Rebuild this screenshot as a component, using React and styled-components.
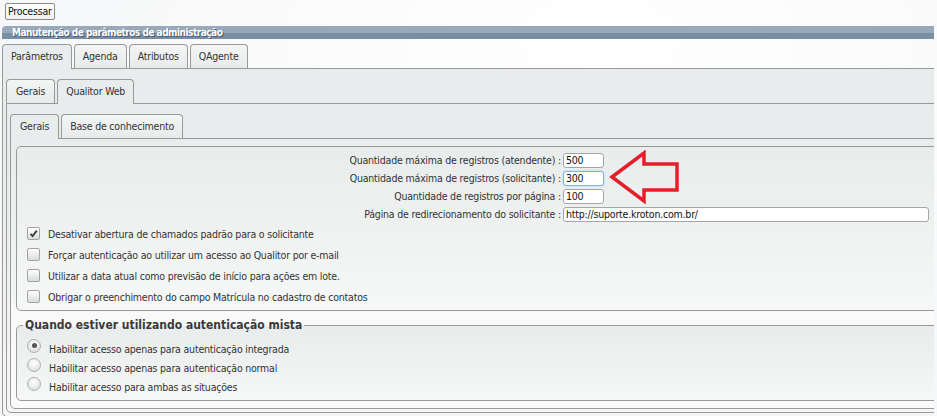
import React from "react";
import styled, { createGlobalStyle, css } from "styled-components";

const GlobalStyle = createGlobalStyle`
  html, body {
    margin: 0;
    padding: 0;
    background: #fafbfb;
  }
  body {
    font-family: Tahoma, "DejaVu Sans Condensed", "DejaVu Sans", sans-serif;
    font-size: 10.5px;
    letter-spacing: -0.2px;
    color: #222;
  }
`;

const Page = styled.div`
  width: 937px;
  height: 416px;
  overflow: hidden;
  background: radial-gradient(ellipse at 64% 10%, #ffffff 0, #f7f8f9 60%, #f3f5f6 100%);
`;

const Toolbar = styled.div`
  padding: 3px 0 0 5px;
  height: 17px;
`;

const Button = styled.button`
  height: 17px;
  padding: 0 2px;
  font: inherit;
  letter-spacing: inherit;
  color: #111;
  background: linear-gradient(#ffffff, #f0f0f0);
  border: 1px solid #8a8a8a;
  border-radius: 2px;
  line-height: 15px;
`;

const Clip = styled.div`
  margin: 6px 0 0 2px;
  width: 932px;
  overflow: hidden;
`;

const Window = styled.div`
  width: 960px;
`;

const TitleBar = styled.div`
  height: 13px;
  line-height: 13px;
  padding-left: 10px;
  border-radius: 4px 0 0 0;
  background: linear-gradient(#98aab9 0, #98aab9 55%, #7a8ea3 55%, #7a8ea3 100%);
  color: #fff;
  font-size: 10px;
  font-weight: bold;
  letter-spacing: -0.5px;
  text-shadow: 1px 1px 0 #4a5a6c;
`;

const TabStrip = styled.div`
  display: flex;
  align-items: flex-end;
  gap: 2px;
  height: 24px;
  margin-top: ${(p) => p.$top || 0}px;
  position: relative;
  z-index: 1;
`;

const Tab = styled.div`
  height: 23px;
  line-height: 23px;
  padding: 0 ${(p) => p.$pad || 8}px;
  border: 1px solid #999;
  border-bottom: none;
  border-radius: 4px 4px 0 0;
  color: #333;
  background: linear-gradient(#f4f5f5, #e8ebeb);
  box-sizing: content-box;
  ${(p) =>
    p.$active &&
    css`
      height: 24px;
      margin-bottom: -1px;
      background: #e9ecec;
    `}
`;

const Panel = styled.div`
  border: 1px solid #999;
  border-radius: 0 0 5px 5px;
  padding: ${(p) => p.$pad};
  background: ${(p) =>
    p.$fade
      ? "linear-gradient(#e9ecec 0, #f4f5f5 160px, #fafafa 175px, #fafafa 100%)"
      : "linear-gradient(#e9ecec 0, #e9ecec 40px, #f5f6f6 100%)"};
`;

const Box = styled.div`
  border: 1px solid #999;
  border-radius: 5px;
  padding: 4px 0 3px 0;
  background: linear-gradient(#e9ecec, #f6f7f7);
`;

const FormGrid = styled.div`
  display: grid;
  grid-template-columns: 544px 1fr;
  grid-auto-rows: 18px;
  align-items: center;
  column-gap: 2px;
`;

const Label = styled.label`
  text-align: right;
  color: #333;
  white-space: nowrap;
`;

const TextInput = styled.input`
  box-sizing: border-box;
  width: ${(p) => p.$w}px;
  height: 15px;
  padding: 0 2px;
  font: inherit;
  letter-spacing: inherit;
  color: #111;
  background: #fff;
  border: 1px solid ${(p) => (p.$focus ? "#7eb4ea" : "#a5a5a5")};
  border-radius: 3px;
  box-shadow: ${(p) => (p.$focus ? "0 0 2px #9cc8f0" : "none")};
  outline: none;
`;

const OptionList = styled.div`
  padding: ${(p) => p.$pad || "0 0 0 10px"};
`;

const Option = styled.div`
  display: flex;
  align-items: center;
  height: ${(p) => p.$h}px;
  color: #333;
  gap: 8px;
`;

const Check = styled.span`
  width: 11px;
  height: 11px;
  border: 1px solid #a3a3a3;
  border-radius: 2px;
  background: linear-gradient(#ffffff, #d9dcdc);
  display: flex;
  align-items: center;
  justify-content: center;
  flex-shrink: 0;
`;

const Radio = styled.span`
  width: 12px;
  height: 12px;
  border: 1px solid #b0b0b0;
  border-radius: 50%;
  background: radial-gradient(circle at 50% 35%, #ffffff, #d6d9d9);
  display: flex;
  align-items: center;
  justify-content: center;
  flex-shrink: 0;
  margin-top: -6px;
  &::after {
    content: "";
    display: ${(p) => (p.$on ? "block" : "none")};
    width: 5px;
    height: 5px;
    border-radius: 50%;
    background: #555;
  }
`;

const Fieldset = styled.fieldset`
  margin: 7px 0 0 0;
  padding: 0 0 4px 6px;
  border: 1px solid #999;
  border-radius: 5px;
  background: linear-gradient(#e9ecec, #f6f7f7);
`;

const Legend = styled.legend`
  padding: 0 2px;
  font-size: 12px;
  font-weight: bold;
  letter-spacing: 0;
  color: #3a3a3a;
  line-height: 15px;
`;

const Arrow = styled.svg`
  position: absolute;
  left: 608px;
  top: 150px;
`;

const Stage = styled.div`
  position: relative;
`;

const formRows = [
  { label: "Quantidade máxima de registros (atendente) :", value: "500", w: 41 },
  { label: "Quantidade máxima de registros (solicitante) :", value: "300", w: 41, focus: true },
  { label: "Quantidade de registros por página :", value: "100", w: 41 },
  { label: "Página de redirecionamento do solicitante :", value: "http://suporte.kroton.com.br/", w: 366 },
];

const checks = [
  { text: "Desativar abertura de chamados padrão para o solicitante", on: true },
  { text: "Forçar autenticação ao utilizar um acesso ao Qualitor por e-mail" },
  { text: "Utilizar a data atual como previsão de início para ações em lote." },
  { text: "Obrigar o preenchimento do campo Matrícula no cadastro de contatos" },
];

const radios = [
  { text: "Habilitar acesso apenas para autenticação integrada", on: true },
  { text: "Habilitar acesso apenas para autenticação normal" },
  { text: "Habilitar acesso para ambas as situações" },
];

export default function App() {
  return (
    <Page>
      <GlobalStyle />
      <Stage>
        <Toolbar>
          <Button>Processar</Button>
        </Toolbar>
        <Clip>
          <Window>
            <TitleBar>Manutenção de parâmetros de administração</TitleBar>
            <TabStrip $top={5}>
              <Tab $active>Parâmetros</Tab>
              <Tab>Agenda</Tab>
              <Tab>Atributos</Tab>
              <Tab>QAgente</Tab>
            </TabStrip>
            <Panel $pad="10px 0 3px 3px">
              <TabStrip>
                <Tab $pad={9}>Gerais</Tab>
                <Tab $active>Qualitor Web</Tab>
              </TabStrip>
              <Panel $pad="10px 0 3px 3px">
                <TabStrip>
                  <Tab $active $pad={9}>Gerais</Tab>
                  <Tab>Base de conhecimento</Tab>
                </TabStrip>
                <Panel $pad="7px 0 7px 5px" $fade>
                  <Box>
                    <FormGrid>
                      {formRows.map((r) => (
                        <React.Fragment key={r.label}>
                          <Label>{r.label}</Label>
                          <TextInput $w={r.w} $focus={r.focus} defaultValue={r.value} readOnly />
                        </React.Fragment>
                      ))}
                    </FormGrid>
                    <OptionList>
                      {checks.map((c) => (
                        <Option key={c.text} $h={21}>
                          <Check>
                            {c.on && (
                              <svg width="9" height="9" viewBox="0 0 9 9">
                                <path d="M1.5 4.8 L3.6 7 L7.8 1.6" fill="none" stroke="#3c3c3c" strokeWidth="1.8" />
                              </svg>
                            )}
                          </Check>
                          {c.text}
                        </Option>
                      ))}
                    </OptionList>
                  </Box>
                  <Fieldset>
                    <Legend>Quando estiver utilizando autenticação mista</Legend>
                    <OptionList $pad="6px 0 0 4px">
                      {radios.map((r) => (
                        <Option key={r.text} $h={19}>
                          <Radio $on={r.on} />
                          {r.text}
                        </Option>
                      ))}
                    </OptionList>
                  </Fieldset>
                </Panel>
              </Panel>
            </Panel>
          </Window>
        </Clip>
        <Arrow width="76" height="56" viewBox="0 0 76 56">
          <polygon
            points="4,27 36,3 36,14 69,14 69,40 36,40 36,51"
            fill="none"
            stroke="#e3202a"
            strokeWidth="3.5"
            strokeLinejoin="miter"
          />
        </Arrow>
      </Stage>
    </Page>
  );
}
